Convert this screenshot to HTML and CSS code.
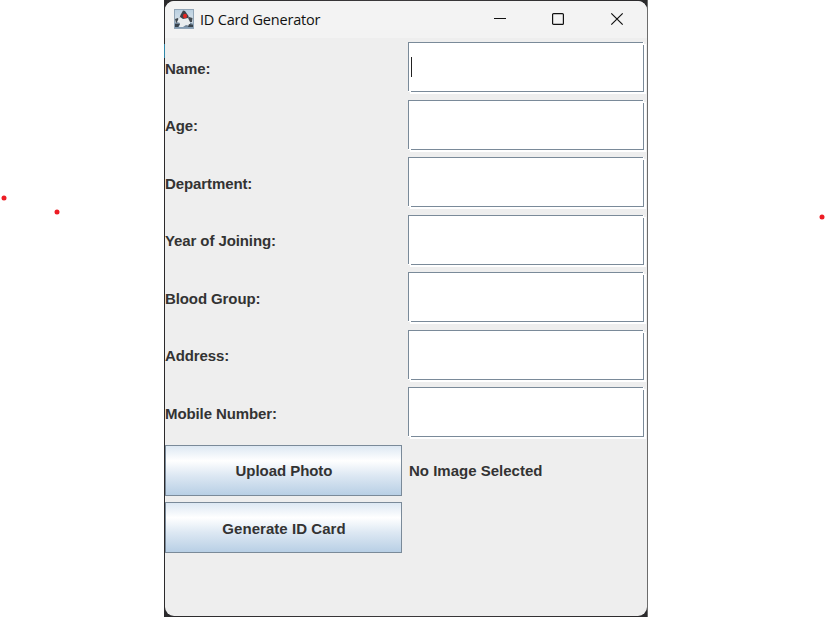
FILE: index.html
```
<!DOCTYPE html>
<html lang="en">
<head>
<meta charset="utf-8">
<title>ID Card Generator</title>
<link rel="stylesheet" href="styles.css">
</head>
<body>
<div class="frame">
  <div class="window">
    <header class="titlebar">
      <svg class="logo" width="20" height="20" viewBox="0 0 20 20">
        <defs><linearGradient id="sky" x2="0" y2="1"><stop offset="0" stop-color="#b9cfe0"/><stop offset=".6" stop-color="#d5e0e9"/><stop offset="1" stop-color="#7793ad"/></linearGradient></defs>
        <rect x=".5" y=".5" width="19" height="19" fill="url(#sky)" stroke="#91a5b7"/>
        <path d="M1 14 L5 13 L15 13 L19 15 V18 H1Z" fill="#728699"/>
        <path d="M9 1.5 L11 2 L14.5 7 L15 11 L5 11 L6.5 6Z" fill="#3d444b"/>
        <path d="M1 10 L4 9 L5 12 L2 14Z M15 8 L18.5 9 L18 13 L15 13Z" fill="#40484f"/>
        <path d="M6 8 L9 10 L14 9 L16 13 L16 17 L12 16 L9 18 L5 18 L6 14 L3 13 L4 11Z" fill="#e9edef"/>
        <path d="M1 15 H6 L4 18 H1Z M15 15 L19 16 V18 H14Z" fill="#39434c"/>
        <ellipse cx="11" cy="7" rx="2" ry="2.3" fill="#e52622"/>
      </svg>
      <h1 class="title">ID Card Generator</h1>
      <div class="controls">
        <svg width="14" height="14" viewBox="0 0 14 14"><path d="M1 6.5H13"/></svg>
        <svg width="14" height="14" viewBox="0 0 14 14"><rect x="1.6" y="1.6" width="10.8" height="10.8" rx="1"/></svg>
        <svg width="14" height="14" viewBox="0 0 14 14"><path d="M1.3 1.3L12.7 12.7M12.7 1.3L1.3 12.7"/></svg>
      </div>
    </header>
    <main class="form">
      <label>Name:</label><div class="field"><i class="caret"></i></div>
      <label>Age:</label><div class="field"></div>
      <label>Department:</label><div class="field"></div>
      <label>Year of Joining:</label><div class="field"></div>
      <label>Blood Group:</label><div class="field"></div>
      <label>Address:</label><div class="field"></div>
      <label>Mobile Number:</label><div class="field"></div>
      <button class="upload">Upload Photo</button><span class="status">No Image Selected</span>
      <button>Generate ID Card</button>
    </main>
  </div>
</div>
<svg class="marks" width="825" height="617"><circle cx="4" cy="198" r="2.5"/><circle cx="57" cy="212" r="2.5"/><circle cx="822" cy="217" r="2.5"/><path d="M164 44h1v14h-1z" fill="#2f87a8"/></svg>
</body>
</html>
```
FILE: styles.css
```
* { box-sizing: border-box; }
body { margin: 0; background: #fff; height: 617px; overflow: hidden; }
.frame {
  width: 484px;
  height: 617px;
  margin-left: 164px;
  padding: 1px;
  background: linear-gradient(90deg, #2b2a2c, #3b393b 50%, #2b2a2c);
  box-shadow: inset -1px 0 #6c6c6c;
}
.window {
  height: 615px;
  border-radius: 9px;
  overflow: hidden;
  background: #eee;
}
.titlebar {
  height: 37px;
  display: flex;
  align-items: center;
  padding: 0 23px 2px 9px;
  background: #f3f3f3;
}
.title {
  margin: 1px 0 0 6px;
  font: 400 14.5px "Open Sans", "Noto Sans", sans-serif;
  letter-spacing: -.2px;
  color: #111;
}
.controls { display: flex; margin-left: auto; }
.controls svg { fill: none; stroke: #111; stroke-width: 1.2; display: block; }
.controls svg:first-child { margin-right: 44px; }
.controls svg:last-child { margin-left: 45px; }
.form {
  display: grid;
  grid-template-columns: 237px 238px;
  grid-auto-rows: 51px;
  gap: 6.5px 6px;
  padding-top: 4px;
  font: bold 15px "Liberation Sans", Arial, sans-serif;
  letter-spacing: -.1px;
  color: #333;
}
label, .status { display: flex; align-items: center; padding-top: 1px; }
.status { padding-left: 1px; letter-spacing: 0; }
.field {
  position: relative;
  background: #fff;
  border: 1px solid #7a8a99;
  width: 236px;
  height: 50px;
  box-shadow: 2px 2px #fff;
  padding: 14px 2px;
}
/* bevel breaks at the ends of the border lines */
.field::before, .field::after {
  content: "";
  position: absolute;
  background: #fff;
}
.field::before { left: -1px; bottom: -1px; width: 3px; height: 1px; }
.field::after { right: -1px; top: -1px; width: 1px; height: 3px; }
.caret { display: block; width: 1px; height: 20px; background: #222; }
button {
  border: 1px solid #7a8a99;
  border-radius: 0;
  padding: 1px 0 0 1px;
  font: inherit;
  letter-spacing: .05px;
  color: #333;
  background: linear-gradient(#dde8f3, #fff 30%, #dde8f3 60%, #b8cfe5);
}
.upload { letter-spacing: -.05px; }
.marks { position: absolute; left: 0; top: 0; fill: #ed1c24; pointer-events: none; }
```
